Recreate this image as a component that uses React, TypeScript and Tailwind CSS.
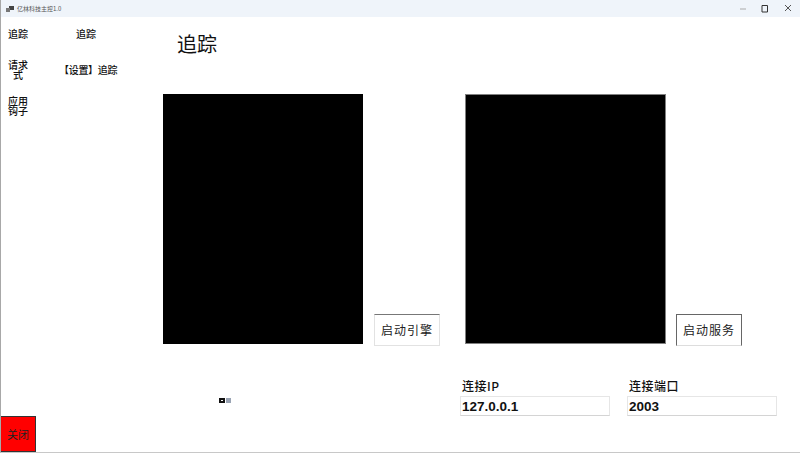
const FONT = "font-['Noto_Sans_CJK_SC','Liberation_Sans',sans-serif]"

function Field({ label, value, width }: { label: string; value: string; width: string }) {
  return (
    <div className={`flex flex-col ${width}`}>
      <span className="h-[19px] pl-[2px] text-[12px] leading-[18px] font-medium tracking-[0.5px] text-[#111]">{label}</span>
      <div className="h-[20px] w-[150px] border border-[#e6e6e6] border-b-[#d4d4d4] bg-white pl-[1px] font-['Liberation_Sans',sans-serif] text-[13.5px] leading-[19px] font-bold text-[#111]">
        {value}
      </div>
    </div>
  )
}

export default function App() {
  return (
    <div className={`flex h-[453px] w-[800px] flex-col overflow-hidden border-b border-l border-[#c8c8c8] border-l-[#a8a8a8] bg-white text-black ${FONT}`}>
      {/* title bar */}
      <div className="flex h-[17px] shrink-0 items-center bg-[#eff4fa] pl-[5px]">
        <svg width="8" height="8" viewBox="0 0 8 8" className="mr-[3px]">
          <rect x="3" y="1" width="5" height="4" fill="#444" />
          <rect x="0" y="3" width="4" height="4" fill="#777" />
        </svg>
        <span className="text-[6px] leading-none text-[#555]">亿林科技主控1.0</span>
        <div className="ml-auto flex items-center">
          <svg width="10" height="10" viewBox="0 0 10 10" className="mr-[10px]">
            <path d="M0 5h6" stroke="#aaa" strokeWidth="1" />
          </svg>
          <svg width="10" height="10" viewBox="0 0 10 10" className="mr-[14px]">
            <path d="M2 1.500h5.500v6.500h-5.500z" fill="none" stroke="#333" strokeWidth="1" />
          </svg>
          <svg width="10" height="10" viewBox="0 0 10 10" className="mr-[6px]">
            <path d="M1 1l6 6M7 1l-6 6" stroke="#555" strokeWidth="1" />
          </svg>
        </div>
      </div>

      <div className="flex min-h-0 flex-1">
        {/* nav */}
        <div className="flex w-[36px] shrink-0 flex-col">
          <div className="flex flex-col items-center pt-[10px] pr-[2px] text-center text-[10px] leading-[10px] font-medium text-[#111]">
            <div className="h-[14px] leading-[14px]">追踪</div>
            <div className="mt-[19px] w-[22px]">请求式</div>
            <div className="mt-[16px] w-[22px]">应用钩子</div>
          </div>
          <button className="mt-auto -ml-[1px] h-[36px] w-[36px] border border-[#333] bg-[#ff0000] text-[11px] text-[#222]">
            关闭
          </button>
        </div>

        {/* sub nav */}
        <div className="flex w-[126px] shrink-0 flex-col pt-[10px] text-[10px] font-medium text-[#111]">
          <div className="h-[14px] pl-[39px] leading-[14px]">追踪</div>
          <div className="mt-[22px] h-[14px] pl-[22px] leading-[14px] tracking-[-0.3px] whitespace-nowrap">【设置】追踪</div>
        </div>

        {/* content */}
        <div className="flex min-w-0 flex-1 flex-col">
          <h1 className="mt-[13px] h-[28px] pl-[14px] text-[20px] leading-[28px] font-normal text-[#111]">追踪</h1>
          <div className="mt-[36px] flex">
            <div className="flex w-[302px] items-end">
              <div className="h-[250px] w-[200px] bg-black" />
              <button className="ml-[11px] -mb-[2px] h-[32px] w-[66px] border border-[#e2e2e2] border-t-[#777] bg-white text-[12px] tracking-[1px] text-[#222]">
                启动引擎
              </button>
            </div>
            <div className="flex items-end">
              <div className="h-[250px] w-[201px] border border-[#808080] bg-black" />
              <button className="ml-[10px] -mb-[2px] h-[32px] w-[66px] border border-[#666] border-b-[#ddd] bg-white text-[12px] tracking-[1px] text-[#222]">
                启动服务
              </button>
            </div>
          </div>
          <div className="mt-[33px] flex">
            <div className="flex w-[297px] items-start pt-[21px] pl-[55px]">
              <svg width="14" height="5" viewBox="0 0 14 5">
                <rect x="1" y="0" width="6" height="5" fill="#111" />
                <rect x="3" y="2" width="2" height="1" fill="#fff" />
                <rect x="8" y="0" width="5" height="5" fill="#9aa4b4" />
              </svg>
            </div>
            <Field label="连接IP" value="127.0.0.1" width="w-[167px]" />
            <Field label="连接端口" value="2003" width="w-[150px]" />
          </div>
        </div>
      </div>
    </div>
  )
}
